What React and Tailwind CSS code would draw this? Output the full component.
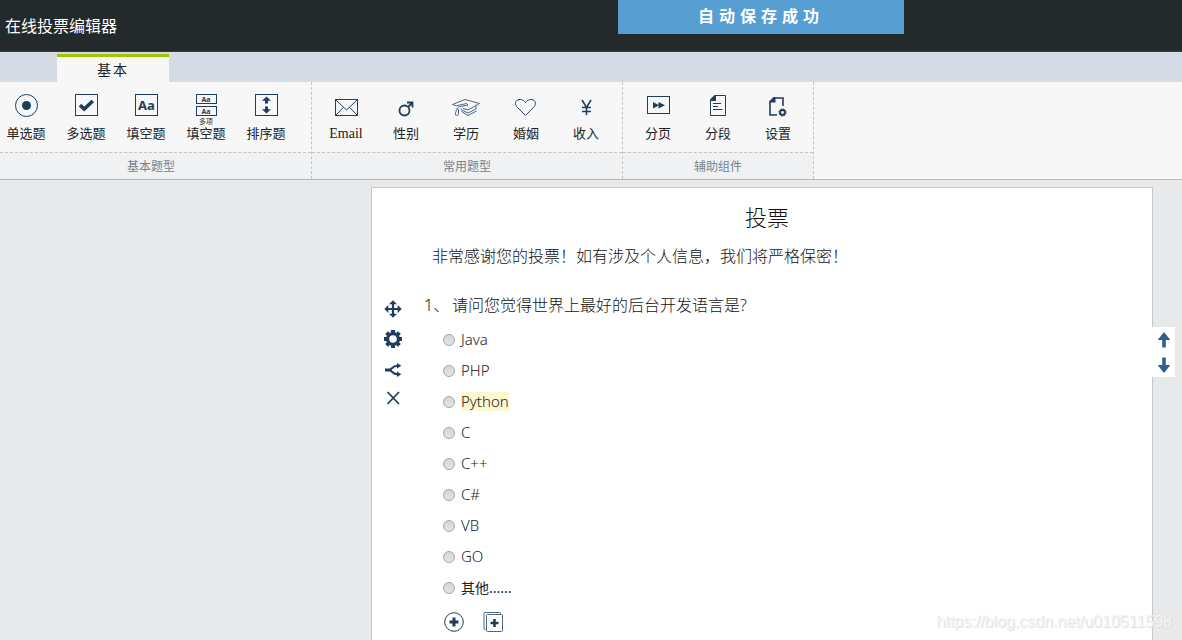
import { useState } from 'react'
import clsx from 'clsx'

const NAVY = '#1f3d5e'

const OPTIONS = ['Java', 'PHP', 'Python', 'C', 'C++', 'C#', 'VB', 'GO', '其他......']

function Icon({ children, size = 24 }) {
  return (
    <svg width={size} height={size} viewBox={`0 0 ${size} ${size}`} fill="none" stroke={NAVY} className="shrink-0 overflow-visible" aria-hidden="true">
      {children}
    </svg>
  )
}

function RadioIcon() {
  return (
    <Icon>
      <circle cx="12.5" cy="12.5" r="11" />
      <circle cx="12.5" cy="12.5" r="4.5" fill={NAVY} stroke="none" />
    </Icon>
  )
}

function CheckIcon() {
  return (
    <Icon>
      <rect x="1.5" y="1.5" width="22" height="21" />
      <path d="M6 12.2l4.2 3.8L18.8 8" strokeWidth="3.6" />
    </Icon>
  )
}

function BlankIcon() {
  return (
    <span className="ml-px flex h-[22px] w-[23px] items-center justify-center border border-[#1f3d5e] font-['Noto_Sans',sans-serif] text-[13px] leading-none font-bold text-[#1f3d5e]">
      Aa
    </span>
  )
}

function MultiBlankIcon() {
  return (
    <span className="flex flex-col gap-[2px] font-['Noto_Sans',sans-serif] text-[7px] leading-none font-bold text-[#1f3d5e]">
      <span className="flex h-[10px] w-[21px] items-center justify-center border border-[#1f3d5e]">Aa</span>
      <span className="flex h-[10px] w-[21px] items-center justify-center border border-[#1f3d5e]">Aa</span>
    </span>
  )
}

function SortIcon() {
  return (
    <Icon>
      <rect x="1.5" y="1.5" width="22" height="21" />
      <g fill={NAVY} stroke="none">
        <path d="M12.5 3.5l4.5 4.2h-3v2.8h-3V7.7H8z" />
        <path d="M12.5 20.5l4.5-4.2h-3v-2.8h-3v2.8H8z" />
      </g>
    </Icon>
  )
}

function MailIcon() {
  return (
    <Icon>
      <rect x="1.5" y="6.5" width="22" height="16" />
      <path d="M2 7l10.5 10L23 7M2 22l7.5-7.7M23 22l-7.5-7.7" />
    </Icon>
  )
}

function GenderIcon() {
  return (
    <Icon>
      <circle cx="10.5" cy="17.5" r="5" strokeWidth="1.8" />
      <path d="M14 14l4-4M13 9.5h5.5v5" strokeWidth="1.8" />
    </Icon>
  )
}

function DegreeIcon() {
  return (
    <Icon>
      <g stroke="#4a6788">
        <path d="M-1.500 11.500L11 6.500l14.500 4-11.500 6.500-5-1.500" />
        <path d="M-1.500 11.500l4 1.300 10-2.300 1.500 1.500-8.500 1.700c-1.600.4-2.200 1.100-2.200 2.300" />
        <path d="M3.200 16c-1.200 1.800-2 3.800-1.700 6 1.200.6 2.300.5 3-.3V16.500z" />
        <path d="M7 15.500l.5 1.500 6.500 3 8-4v-3.500" />
        <path d="M7.500 18.500l6.500 4 8.500-4.500" />
      </g>
    </Icon>
  )
}

function HeartIcon() {
  return (
    <Icon>
      <path d="M11.500 22.500L3.300 14.300C1 12 .8 8.900 2.800 7.500c2.700-2 6.600-1 8.700 2.100 2.100-3.100 6-4.100 8.600-2.100 1.900 1.600 1.700 4.600-.5 6.800z" />
    </Icon>
  )
}

function YenIcon() {
  return (
    <Icon>
      <path d="M8 7l4.500 7.500L17 7M12.500 14v8M8 14.500h9M8 18.500h9" strokeWidth="1.600" />
    </Icon>
  )
}

function PageBreakIcon() {
  return (
    <Icon>
      <rect x="1.5" y="3.5" width="22" height="17" />
      <path d="M7 9v6.500l6-3.200zM12.500 9v6.500l6.500-3.200z" fill={NAVY} stroke="none" />
    </Icon>
  )
}

function SectionIcon() {
  return (
    <Icon>
      <path d="M9.5 2.5h10v20h-15V7.5" />
      <path d="M4 8V6.5L8.500 2H10v6z" fill={NAVY} stroke="none" />
      <path d="M7 10.500h8M7 13.500h5M7 16.500h9.500" />
    </Icon>
  )
}

function SettingIcon() {
  return (
    <Icon>
      <path d="M11 22H4V9M9 5h8v8" strokeWidth="1.600" />
      <path d="M3 9.500V8.500L7.500 4h2v5.500z" fill={NAVY} stroke="none" />
      <circle cx="16.500" cy="19.500" r="2.400" strokeWidth="2" />
      <circle cx="16.500" cy="19.500" r="3.600" strokeWidth="1" strokeDasharray="1.500 1.330" />
    </Icon>
  )
}

function MoveIcon() {
  return (
    <Icon size={18}>
      <path d="M9 3v12M3 9h12" strokeWidth="2.200" />
      <path d="M9 .3L13 4.300H5zM9 17.700l4-4H5zM.3 9l4-4v8zM17.700 9l-4-4v8z" fill={NAVY} stroke="none" />
    </Icon>
  )
}

function GearIcon() {
  return (
    <Icon size={18}>
      <circle cx="9" cy="9" r="5.400" strokeWidth="3.200" />
      <path d="M9 0v3M9 15v3M0 9h3M15 9h3M2.600 2.600l2 2M13.400 13.400l2 2M2.600 15.400l2-2M13.400 4.600l2-2" strokeWidth="4" />
    </Icon>
  )
}

function BranchIcon() {
  return (
    <Icon size={18}>
      <path d="M1 10h6" strokeWidth="3" />
      <path d="M6.500 9.500c2-1.500 2.500-3.700 7-3.700M6.500 10.500c2 1.500 2.500 3.700 7 3.700" strokeWidth="2" />
      <path d="M13 3l4.300 2.800L13 8.600zM13 11.400l4.300 2.800L13 17z" fill={NAVY} stroke="none" />
    </Icon>
  )
}

function CloseIcon() {
  return (
    <Icon size={18}>
      <path d="M3.500 2l11.500 12M15 2L3.500 14" strokeWidth="1.800" />
    </Icon>
  )
}

function AddIcon() {
  return (
    <Icon size={20}>
      <circle cx="10" cy="10" r="9.300" />
      <path d="M10 5.500v9M5.500 10h9" strokeWidth="3" />
    </Icon>
  )
}

function AddBatchIcon() {
  return (
    <Icon size={20}>
      <path d="M2.500 17.500H2a1 1 0 0 1-1-1V1.500a1 1 0 0 1 1-1h14.500a1 1 0 0 1 1 1V2.500" stroke="#4a6788" />
      <rect x="3.500" y="2.500" width="16" height="17" rx="1" stroke="#4a6788" />
      <path d="M11.500 7v8M7.500 11h8" strokeWidth="2.600" />
    </Icon>
  )
}

function ArrowIcon({ down }) {
  return (
    <svg width="12" height="16" viewBox="0 0 12 16" fill="#2f5f8f" className={clsx('block', down && 'rotate-180')} aria-hidden="true">
      <path d="M6 0l6 7.500v.5H7.800v7.500H4.200V8H0v-.5z" />
    </svg>
  )
}

const GROUPS = [
  {
    name: '基本题型',
    pad: 'pr-[19px]',
    labelPad: 'pr-[9px]',
    items: [
      { label: '单选题', icon: <RadioIcon /> },
      { label: '多选题', icon: <CheckIcon /> },
      { label: '填空题', icon: <BlankIcon /> },
      { label: '填空题', icon: <MultiBlankIcon />, note: '多项' },
      { label: '排序题', icon: <SortIcon /> },
    ],
  },
  {
    name: '常用题型',
    pad: 'pr-[10px] pl-2',
    items: [
      { label: 'Email', icon: <MailIcon />, latin: true },
      { label: '性别', icon: <GenderIcon /> },
      { label: '学历', icon: <DegreeIcon /> },
      { label: '婚姻', icon: <HeartIcon /> },
      { label: '收入', icon: <YenIcon /> },
    ],
  },
  {
    name: '辅助组件',
    pad: 'px-[9px]',
    items: [
      { label: '分页', icon: <PageBreakIcon /> },
      { label: '分段', icon: <SectionIcon /> },
      { label: '设置', icon: <SettingIcon /> },
    ],
  },
]

function ToolButton({ label, icon, note, latin }) {
  return (
    <button type="button" className="relative flex w-[52px] cursor-pointer flex-col items-center pt-[11px] text-[#222]">
      <span className="flex h-6 items-center justify-center">{icon}</span>
      {note && <span className="absolute top-9 text-[7px] leading-[8px]">{note}</span>}
      <span className={clsx('mt-[9px] leading-[14px] whitespace-nowrap', latin ? "font-['Liberation_Serif',serif] text-sm leading-[16px]" : 'text-[13px]')}>{label}</span>
    </button>
  )
}

function ToolGroup({ group }) {
  return (
    <section className="flex flex-col border-r border-dashed border-[#c4c4c4]">
      <div className={clsx('flex h-[70px] gap-2', group.pad)}>
        {group.items.map((item, i) => (
          <ToolButton key={i} {...item} />
        ))}
      </div>
      <h2 className={clsx('border-t border-dashed border-[#c4c4c4] bg-[#f0f1f3] pt-px text-center text-xs leading-[25px] text-[#7b818b]', group.labelPad)}>
        {group.name}
      </h2>
    </section>
  )
}

function Option({ text, checked, onPick }) {
  return (
    <label className="flex h-[31px] items-center text-[#222]">
      <input
        type="radio"
        name="language"
        checked={checked}
        onChange={onPick}
        className="mr-[6px] size-3 shrink-0 appearance-none rounded-full border border-[#a5a5a5] bg-linear-to-b from-[#d6d6d6] to-[#e4e4e4] checked:border-4 checked:border-[#1f3d5e]"
      />
      <span className={clsx('leading-[19px]', text.startsWith('其他') ? 'text-sm' : 'text-[15px] font-light', text === 'Python' && 'bg-[#fdf8d0]')}>
        {text}
      </span>
    </label>
  )
}

const QUESTION_TOOLS = [
  { name: '移动', icon: <MoveIcon /> },
  { name: '设置', icon: <GearIcon /> },
  { name: '逻辑', icon: <BranchIcon /> },
  { name: '删除', icon: <CloseIcon /> },
]

export default function App() {
  const [picked, setPicked] = useState(null)

  return (
    <div lang="zh-CN" className="relative flex min-h-screen flex-col bg-[#e7e9eb] font-['Noto_Sans','Noto_Sans_CJK_SC',sans-serif]">
      <header className="flex h-[52px] items-center border-b border-[#35393c] bg-[#24292b] pl-[5px] text-white">
        <h1 className="text-base">在线投票编辑器</h1>
      </header>

      {/* save notice, centred over the sheet */}
      <div className="absolute top-0 right-[30px] left-[370px] flex justify-center">
        <p role="status" className="h-[34px] w-[286px] bg-[#579fd3] text-center text-base leading-[33px] font-bold tracking-[5px] text-white">
          自动保存成功
        </p>
      </div>

      <nav className="flex h-[30px] items-end bg-[#d5dbe4] pl-[57px]">
        <button type="button" className="h-7 w-28 border-t-3 border-[#a2c400] bg-[#f7f7f7] text-sm tracking-[2px] text-[#222]">
          基本
        </button>
      </nav>

      <div className="flex border-b border-[#b5b9bd] bg-[#f7f7f7]">
        {GROUPS.map((g) => (
          <ToolGroup key={g.name} group={g} />
        ))}
      </div>

      <main className="relative mt-[7px] mr-[29px] ml-[371px] flex-1 border border-b-0 border-[#c5c7cb] bg-white pt-[15px] pb-2 text-[#111]">
        <h2 className="pl-[10px] text-center text-[22px] leading-7 font-light">投票</h2>
        <p className="mt-[13px] pl-[60px] text-base leading-6 font-light">非常感谢您的投票！如有涉及个人信息，我们将严格保密！</p>

        <div className="mt-[25px] flex">
          <div className="flex w-[42px] flex-col items-center pt-px">
            {QUESTION_TOOLS.map((t) => (
              <button key={t.name} type="button" aria-label={t.name} className="flex h-[30px] cursor-pointer items-center">
                {t.icon}
              </button>
            ))}
          </div>

          <fieldset className="ml-[10px] min-w-0 flex-1">
            <legend className="flex text-base leading-6 font-light">
              <span className="w-7">1、</span>
              <span>请问您觉得世界上最好的后台开发语言是?</span>
            </legend>
            <div className="mt-[7px] ml-[19px]">
              {OPTIONS.map((o) => (
                <Option key={o} text={o} checked={picked === o} onPick={() => setPicked(o)} />
              ))}
            </div>
            <div className="mt-[9px] ml-5 flex gap-[19px]">
              <button type="button" aria-label="添加选项" className="cursor-pointer"><AddIcon /></button>
              <button type="button" aria-label="批量添加" className="cursor-pointer"><AddBatchIcon /></button>
            </div>
          </fieldset>
        </div>

        <div className="absolute top-[139px] -right-[23px] flex h-[50px] w-6 flex-col items-center justify-center gap-[9px] bg-white pt-px pl-px">
          <button type="button" aria-label="上移" className="cursor-pointer"><ArrowIcon /></button>
          <button type="button" aria-label="下移" className="cursor-pointer"><ArrowIcon down /></button>
        </div>
      </main>

      <p className="pointer-events-none absolute right-[10px] bottom-[6px] font-['Liberation_Sans',sans-serif] text-base leading-6 text-[#f3f3f3] [text-shadow:1px_1px_1px_#dcdcdc]">
        https://blog.csdn.net/u010511598
      </p>
    </div>
  )
}
